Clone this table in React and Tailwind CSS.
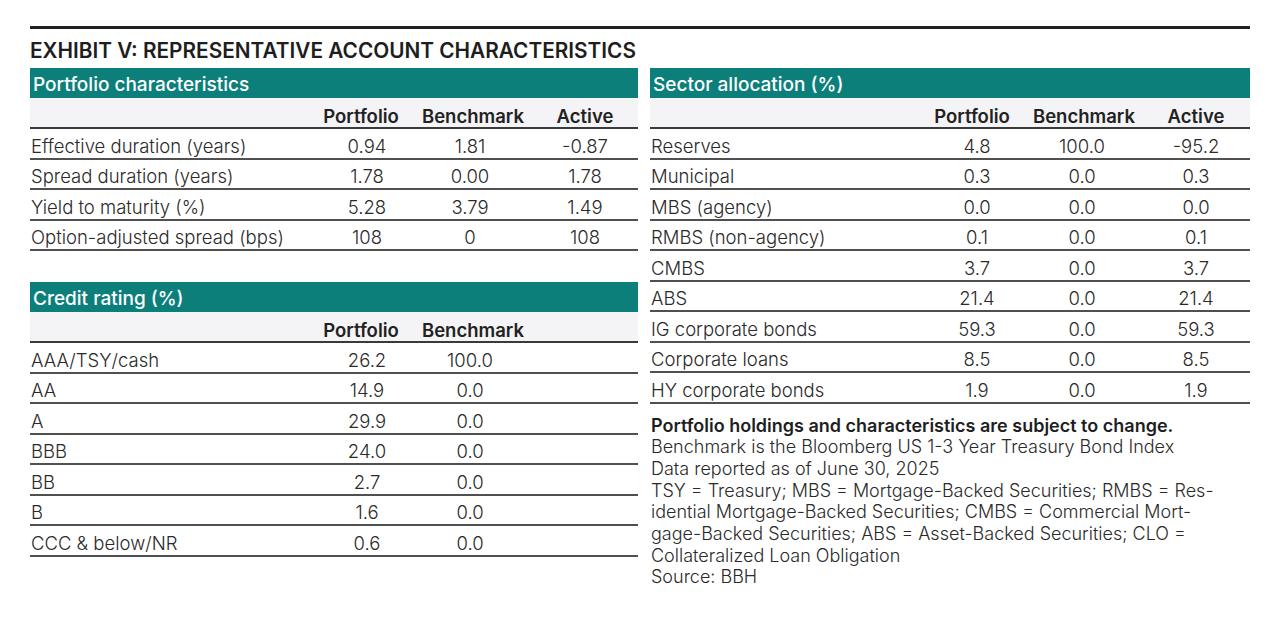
import React from "react";

const font = { fontFamily: "Inter, 'Liberation Sans', sans-serif" };

function Row({ cells, n, valPad }) {
  return (
    <div className="flex items-center h-[30.5px] pt-[7px] border-b-2 border-[#505050] text-[18.5px] font-light text-[#2a2a2a]">
      <div className="flex-1 pl-[1px] whitespace-nowrap">{cells[0]}</div>
      {Array.from({ length: n }).map((_, i) => (
        <div key={i} className={`w-[112px] text-center ${valPad[i]}`}>{cells[i + 1] ?? ""}</div>
      ))}
    </div>
  );
}

function Table({ title, headers, rows, totalCols = 3, headPad, valPad }) {
  return (
    <div>
      <div className="h-[30px] pt-[5px] bg-[#0d7f7b] flex items-center pl-[3px] text-white text-[19px] font-medium">
        {title}
      </div>
      <div className="flex items-center h-[31px] pt-[9px] bg-[#f4f4f6] border-b-2 border-[#3a3a3a] text-[18.5px] font-semibold text-[#222]">
        <div className="flex-1" />
        {Array.from({ length: totalCols }).map((_, i) => (
          <div key={i} className={`w-[112px] text-center ${headPad}`}>{headers[i] ?? ""}</div>
        ))}
      </div>
      {rows.map((r, i) => (
        <Row key={i} cells={r} n={totalCols} valPad={valPad} />
      ))}
    </div>
  );
}

const leftHead = "pl-[6px]";
const leftVals = ["pl-[18px]", "pl-0", "pl-[6px]"];
const rightHead = "pl-[4px]";
const rightVals = ["pl-[14px]", "pl-0", "pl-[4px]"];

export default function App() {
  return (
    <div className="w-[1280px] h-[621px] bg-white pl-[30px] pt-[26px]" style={font}>
      <div className="h-[3px] w-[1220px] bg-[#222]" />
      <div className="h-[39px] flex items-center text-[20.8px] font-semibold text-[#1e1e1e] pt-[5px]">
        EXHIBIT V: REPRESENTATIVE ACCOUNT CHARACTERISTICS
      </div>
      <div className="flex gap-[12px]">
        <div className="w-[608px] flex flex-col gap-[31px]">
          <Table
            title="Portfolio characteristics"
            headers={["Portfolio", "Benchmark", "Active"]}
            headPad={leftHead}
            valPad={leftVals}
            rows={[
              ["Effective duration (years)", "0.94", "1.81", "-0.87"],
              ["Spread duration (years)", "1.78", "0.00", "1.78"],
              ["Yield to maturity (%)", "5.28", "3.79", "1.49"],
              ["Option-adjusted spread (bps)", "108", "0", "108"],
            ]}
          />
          <Table
            title="Credit rating (%)"
            headers={["Portfolio", "Benchmark"]}
            headPad={leftHead}
            valPad={leftVals}
            rows={[
              ["AAA/TSY/cash", "26.2", "100.0"],
              ["AA", "14.9", "0.0"],
              ["A", "29.9", "0.0"],
              ["BBB", "24.0", "0.0"],
              ["BB", "2.7", "0.0"],
              ["B", "1.6", "0.0"],
              ["CCC & below/NR", "0.6", "0.0"],
            ]}
          />
        </div>
        <div className="w-[600px]">
          <Table
            title="Sector allocation (%)"
            headers={["Portfolio", "Benchmark", "Active"]}
            headPad={rightHead}
            valPad={rightVals}
            rows={[
              ["Reserves", "4.8", "100.0", "-95.2"],
              ["Municipal", "0.3", "0.0", "0.3"],
              ["MBS (agency)", "0.0", "0.0", "0.0"],
              ["RMBS (non-agency)", "0.1", "0.0", "0.1"],
              ["CMBS", "3.7", "0.0", "3.7"],
              ["ABS", "21.4", "0.0", "21.4"],
              ["IG corporate bonds", "59.3", "0.0", "59.3"],
              ["Corporate loans", "8.5", "0.0", "8.5"],
              ["HY corporate bonds", "1.9", "0.0", "1.9"],
            ]}
          />
          <div className="mt-[11px] pl-[1px] text-[18px] leading-[21.7px] text-[#2a2a2a] font-light whitespace-nowrap">
            <div className="font-semibold text-[#1e1e1e]">Portfolio holdings and characteristics are subject to change.</div>
            <div>Benchmark is the Bloomberg US 1-3 Year Treasury Bond Index</div>
            <div>Data reported as of June 30, 2025</div>
            <div>TSY = Treasury; MBS = Mortgage-Backed Securities; RMBS = Res-</div>
            <div>idential Mortgage-Backed Securities; CMBS = Commercial Mort-</div>
            <div>gage-Backed Securities; ABS = Asset-Backed Securities; CLO =</div>
            <div>Collateralized Loan Obligation</div>
            <div>Source: BBH</div>
          </div>
        </div>
      </div>
    </div>
  );
}
